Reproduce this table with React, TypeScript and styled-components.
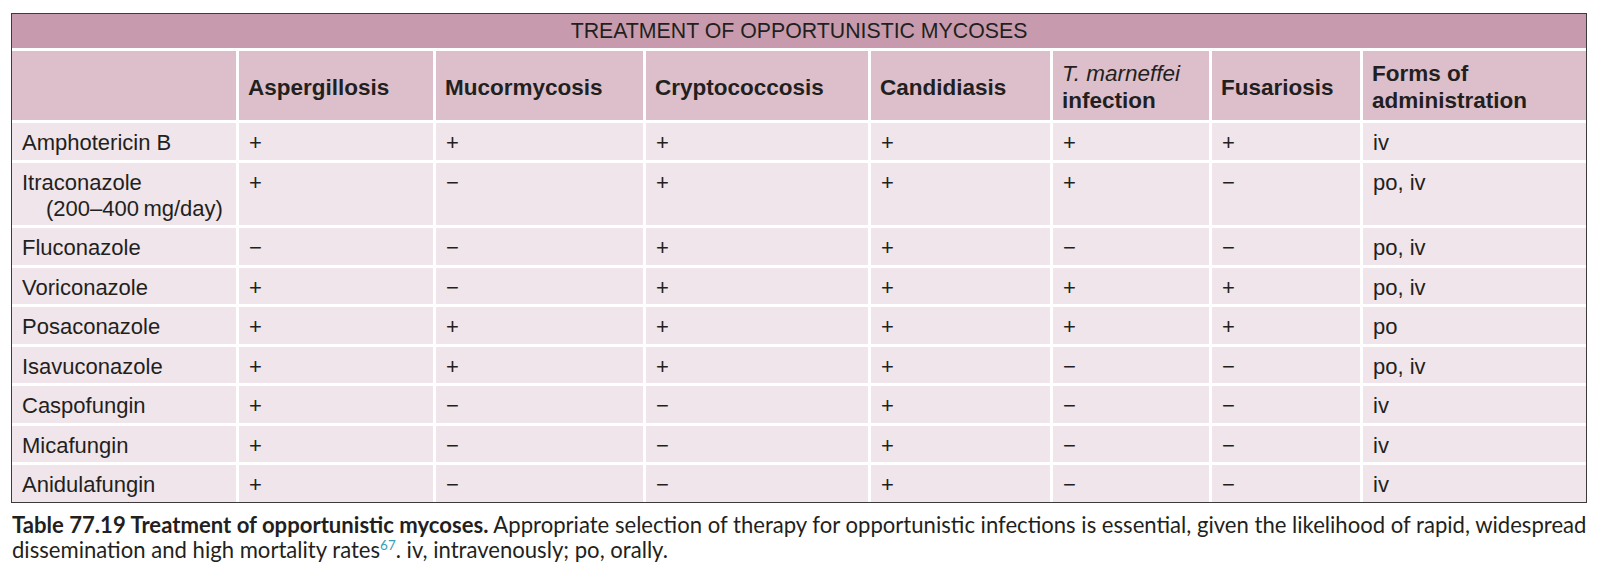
import React from "react";
import styled, { createGlobalStyle } from "styled-components";

const GlobalStyle = createGlobalStyle`
  html, body {
    margin: 0;
    padding: 0;
    background: #ffffff;
  }
  body {
    font-family: "Liberation Sans", Arial, sans-serif;
    color: #231f20;
  }
`;

type Mark = "+" | "-";

type Drug = {
  name: string;
  dose?: string;
  marks: Mark[];
  forms: string;
};

const diseases = [
  "Aspergillosis",
  "Mucormycosis",
  "Cryptococcosis",
  "Candidiasis",
  "T. marneffei infection",
  "Fusariosis",
];

const drugs: Drug[] = [
  { name: "Amphotericin B", marks: ["+", "+", "+", "+", "+", "+"], forms: "iv" },
  {
    name: "Itraconazole",
    dose: "(200–400\u2009mg/day)",
    marks: ["+", "-", "+", "+", "+", "-"],
    forms: "po, iv",
  },
  { name: "Fluconazole", marks: ["-", "-", "+", "+", "-", "-"], forms: "po, iv" },
  { name: "Voriconazole", marks: ["+", "-", "+", "+", "+", "+"], forms: "po, iv" },
  { name: "Posaconazole", marks: ["+", "+", "+", "+", "+", "+"], forms: "po" },
  { name: "Isavuconazole", marks: ["+", "+", "+", "+", "-", "-"], forms: "po, iv" },
  { name: "Caspofungin", marks: ["+", "-", "-", "+", "-", "-"], forms: "iv" },
  { name: "Micafungin", marks: ["+", "-", "-", "+", "-", "-"], forms: "iv" },
  { name: "Anidulafungin", marks: ["+", "-", "-", "+", "-", "-"], forms: "iv" },
];

const App = () => {
  return (
    <>
      <GlobalStyle />
      <Page>
        <Table>
          <Title>TREATMENT OF OPPORTUNISTIC MYCOSES</Title>
          <HeadCell />
          {diseases.map((d) =>
            d.startsWith("T. marneffei") ? (
              <HeadCell key={d}>
                <HeadText>
                  <Species>T. marneffei</Species>
                  <br />
                  infection
                </HeadText>
              </HeadCell>
            ) : (
              <HeadCell key={d}>
                <HeadText>{d}</HeadText>
              </HeadCell>
            )
          )}
          <HeadCell>
            <HeadText>
              Forms of
              <br />
              administration
            </HeadText>
          </HeadCell>
          {drugs.map((drug) => (
            <React.Fragment key={drug.name}>
              <Cell>
                {drug.name}
                {drug.dose && <Dose>{drug.dose}</Dose>}
              </Cell>
              {drug.marks.map((m, i) => (
                <Cell key={i}>{m === "+" ? "+" : "\u2212"}</Cell>
              ))}
              <Cell>{drug.forms}</Cell>
            </React.Fragment>
          ))}
        </Table>
        <Caption>
          <b>Table 77.19 Treatment of opportunistic mycoses.</b> Appropriate
          selection of therapy for opportunistic infections is essential, given
          the likelihood of rapid, widespread
          <br />
          dissemination and high mortality rates<Ref>67</Ref>. iv,
          intravenously; po, orally.
        </Caption>
      </Page>
    </>
  );
};

export default App;

const Page = styled.div`
  padding: 13px 0 0 11px;
  width: 1576px;
`;

const Table = styled.div`
  display: grid;
  grid-template-columns: 224px 194px 207px 222px 179px 156px 148px 223px;
  gap: 3px;
  background: #ffffff;
  border: 1px solid #3c3a3b;
  font-size: 22px;
  color: #231f20;
`;

const Title = styled.div`
  grid-column: 1 / -1;
  height: 34px;
  display: flex;
  align-items: center;
  justify-content: center;
  background: #c79bad;
  font-size: 21.3px;
`;

const HeadCell = styled.div`
  height: 69px;
  display: flex;
  align-items: center;
  padding: 0 9px;
  background: #dcbfcb;
`;

const HeadText = styled.div`
  font-weight: bold;
  font-size: 22.5px;
  line-height: 27px;
  padding-top: 3px;
`;

const Species = styled.span`
  font-style: italic;
  font-weight: normal;
`;

const Cell = styled.div`
  background: #f0e5ea;
  padding: 7px 10px 3.5px 10px;
  line-height: 26px;
`;

const Dose = styled.span`
  display: block;
  padding-left: 24px;
`;

const Caption = styled.p`
  margin: 9px 0 0 1px;
  font-family: Lato, "Open Sans", sans-serif;
  font-size: 22.1px;
  line-height: 25px;
  color: #231f20;
  white-space: nowrap;
  b {
    font-weight: bold;
  }
`;

const Ref = styled.span`
  position: relative;
  top: -8px;
  color: #3a9fb5;
  font-size: 13.5px;
  line-height: 0;
`;
